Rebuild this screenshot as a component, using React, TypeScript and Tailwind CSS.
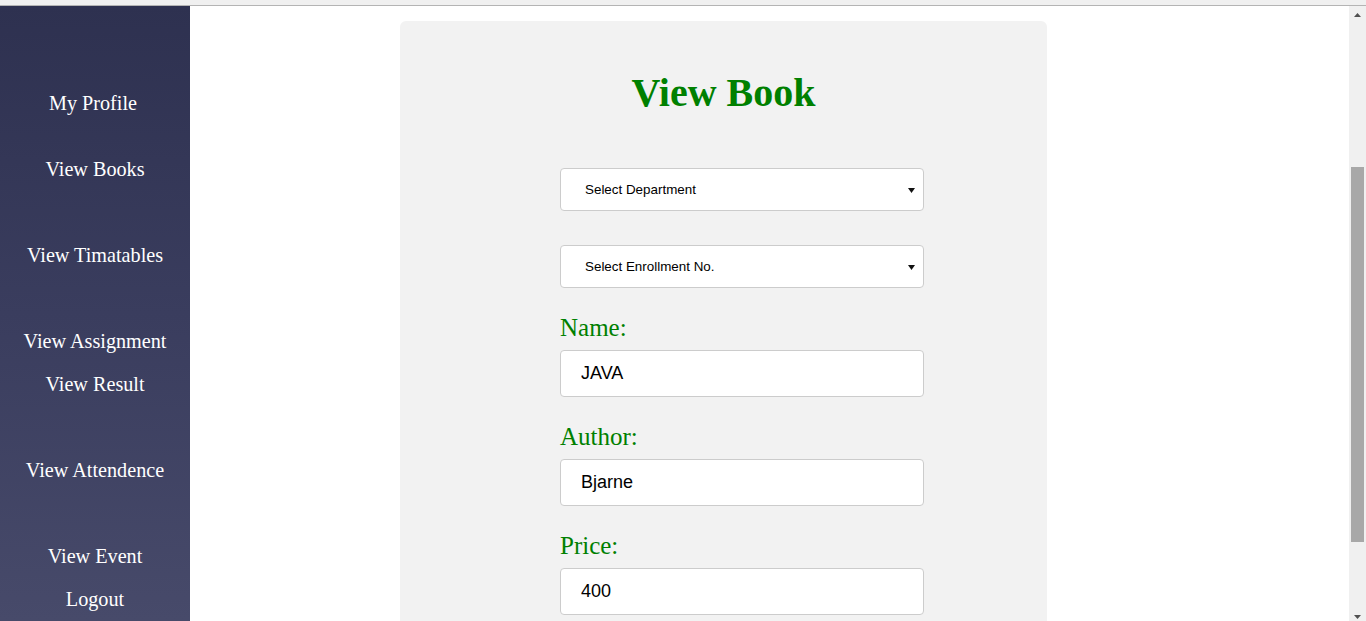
import React from "react";

const menu = [
  { label: "My Profile", gap: "mt-0 pr-1" },
  { label: "View Books", gap: "mt-[23px]" },
  { label: "View Timatables", gap: "mt-[43px]" },
  { label: "View Assignment", gap: "mt-[43px]" },
  { label: "View Result", gap: "mt-0" },
  { label: "View Attendence", gap: "mt-[43px]" },
  { label: "View Event", gap: "mt-[43px]" },
  { label: "Logout", gap: "mt-0" },
];

const fields = [
  { label: "Name:", value: "JAVA" },
  { label: "Author:", value: "Bjarne" },
  { label: "Price:", value: "400" },
];

function Caret() {
  return (
    <svg width="7" height="5" viewBox="0 0 7 5" className="shrink-0">
      <path d="M0 0 H7 L3.5 5 Z" fill="#111" />
    </svg>
  );
}

function FakeSelect({ text, className }: { text: string; className?: string }) {
  return (
    <div
      className={`flex h-[43px] items-center justify-between rounded-[4px] border border-[#cccccc] bg-white pl-[24px] pr-[8px] pt-[2px] text-[13.4px] text-black font-['Liberation_Sans',Arial,sans-serif] ${className ?? ""}`}
    >
      <span>{text}</span>
      <Caret />
    </div>
  );
}

export default function App() {
  return (
    <div className="flex h-screen flex-col overflow-hidden bg-white">
      {/* browser chrome edge */}
      <div className="h-[6px] shrink-0 border-b border-[#b4b4b4] bg-[#f0f0f0]" />

      <div className="flex min-h-0 flex-1">
        <aside className="w-[190px] shrink-0 bg-linear-to-b from-[#2e3150] via-[#3a3d5e] to-[#474a6a] pt-[76px] text-center font-['Liberation_Serif','Times_New_Roman',serif] text-[20.2px] text-white">
          {menu.map((m) => (
            <div key={m.label} className={`${m.gap} leading-[43px]`}>
              {m.label}
            </div>
          ))}
        </aside>

        <main className="min-w-0 flex-1 overflow-hidden">
          <div className="ml-[210px] mt-[15px] w-[647px] rounded-t-md bg-[#f2f2f2] pb-10 pt-[49px]">
            <h1 className="text-center font-['Liberation_Serif','Times_New_Roman',serif] text-[40px] font-bold leading-[46px] text-[#008000]">
              View Book
            </h1>

            <div className="ml-[160px] mt-[52px] w-[364px]">
              <FakeSelect text="Select Department" />
              <FakeSelect text="Select Enrollment No." className="mt-[34px]" />

              {fields.map((f) => (
                <div key={f.label}>
                  <label className="mt-[26px] block font-['Liberation_Serif','Times_New_Roman',serif] text-[25px] leading-[27px] text-[#008000]">
                    {f.label}
                  </label>
                  <input
                    readOnly
                    defaultValue={f.value}
                    className="mt-[9px] block h-[47px] w-full rounded-[4px] border border-[#cccccc] bg-white pl-[20px] font-['Liberation_Sans',Arial,sans-serif] text-[18px] text-black outline-none"
                  />
                </div>
              ))}
            </div>
          </div>
        </main>

        {/* page scrollbar */}
        <div className="flex w-[17px] shrink-0 flex-col items-center bg-[#f0f0f0]">
          <svg width="7" height="4" viewBox="0 0 7 4" className="mt-[7px]">
            <path d="M3.5 0 L7 4 H0 Z" fill="#505050" />
          </svg>
          <div className="mt-[150px] h-[375px] w-[13px] bg-[#a8a8a8]" />
          <div className="flex-1" />
          <svg width="7" height="4" viewBox="0 0 7 4" className="mb-[2px]">
            <path d="M0 0 H7 L3.5 4 Z" fill="#505050" />
          </svg>
        </div>
      </div>
    </div>
  );
}
